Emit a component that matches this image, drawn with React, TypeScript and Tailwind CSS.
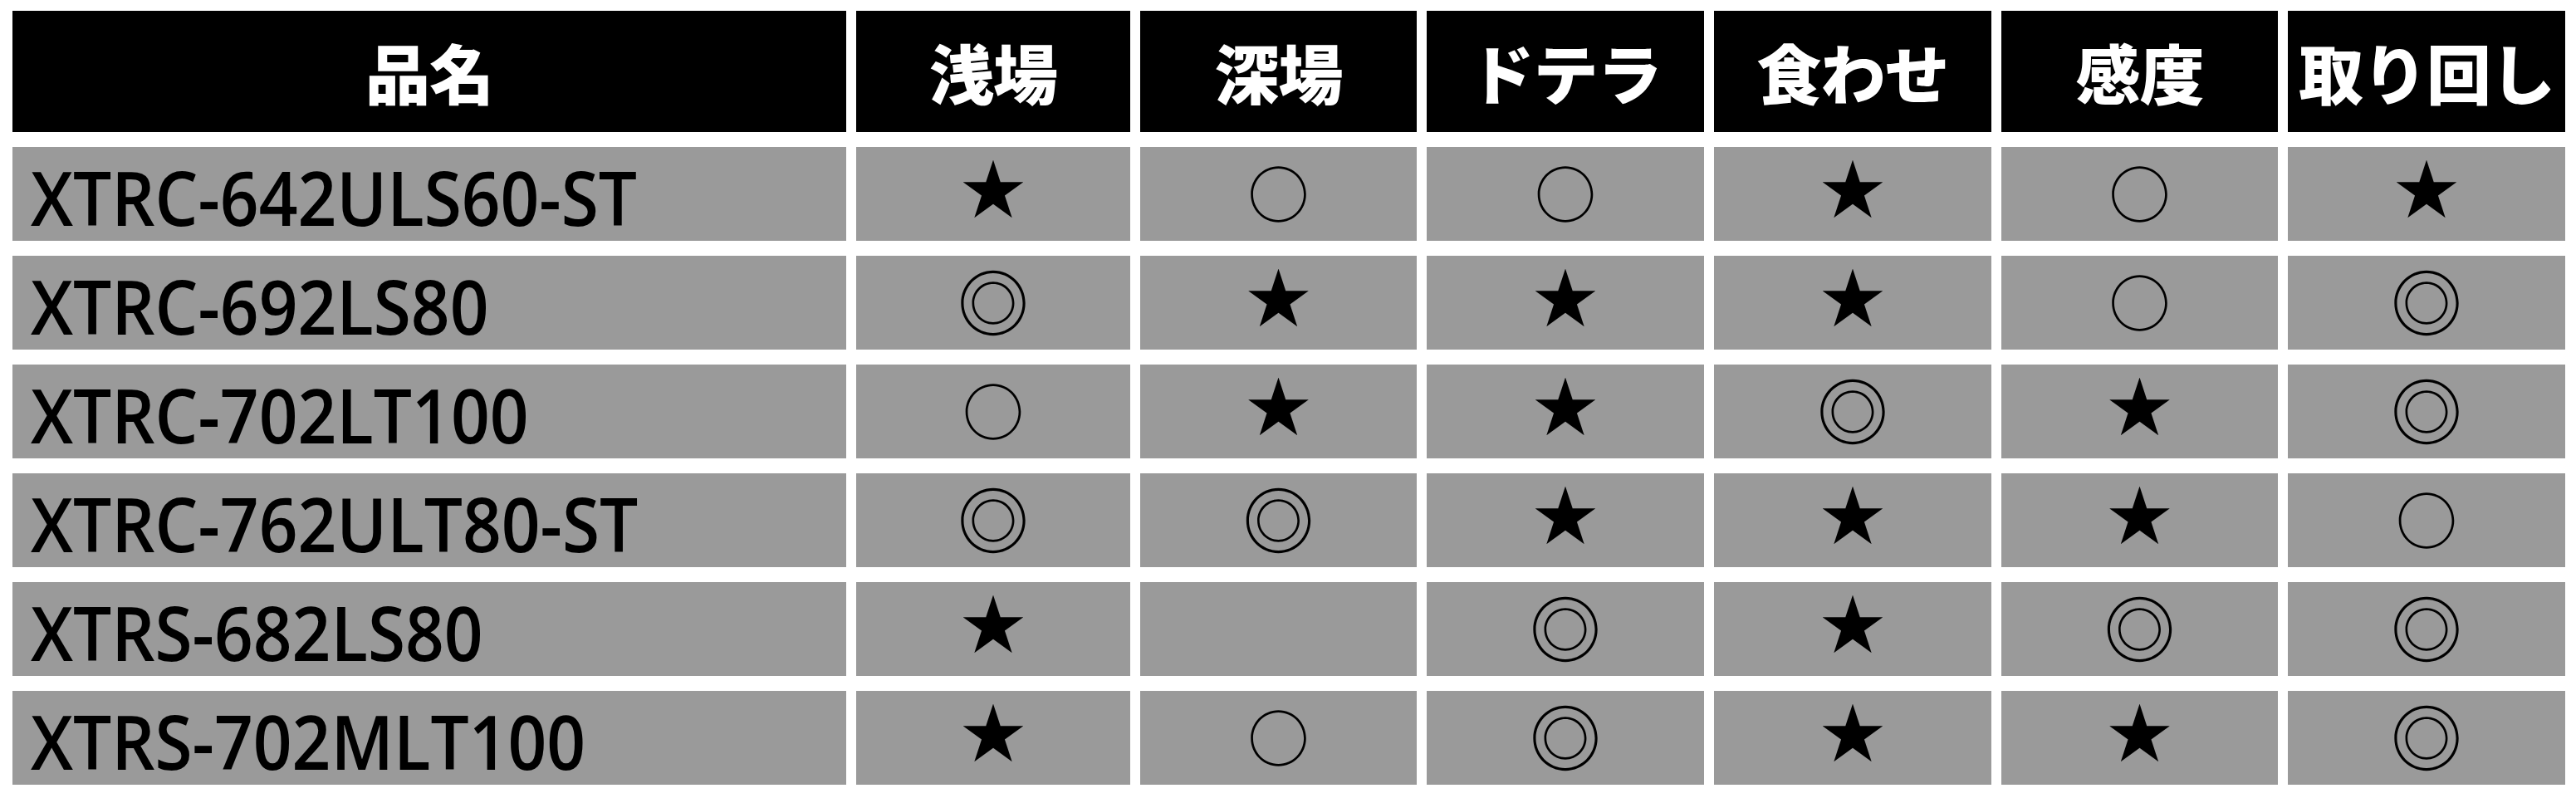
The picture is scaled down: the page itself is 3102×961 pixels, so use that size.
const headers = ['浅場', '深場', 'ドテラ', '食わせ', '感度', '取り回し']

const rows: { name: string; marks: string[] }[] = [
  { name: 'XTRC-642ULS60-ST', marks: ['★', '○', '○', '★', '○', '★'] },
  { name: 'XTRC-692LS80', marks: ['◎', '★', '★', '★', '○', '◎'] },
  { name: 'XTRC-702LT100', marks: ['○', '★', '★', '◎', '★', '◎'] },
  { name: 'XTRC-762ULT80-ST', marks: ['◎', '◎', '★', '★', '★', '○'] },
  { name: 'XTRS-682LS80', marks: ['★', '', '◎', '★', '◎', '◎'] },
  { name: 'XTRS-702MLT100', marks: ['★', '○', '◎', '★', '★', '◎'] },
]

const markStyle: Record<string, string> = {
  '★': 'text-[78px] -translate-y-[11px]',
  '○': 'text-[74px] -translate-y-[4px]',
  '◎': 'text-[86px] -translate-y-[4px]',
}

const HeadCell = ({ label }: { label: string }) => (
  <div className="bg-black flex items-center justify-center">
    <span className="text-white text-[78px] leading-none font-black tracking-[-1px] font-['Noto_Sans_CJK_JP',sans-serif]">
      {label}
    </span>
  </div>
)

const Mark = ({ value }: { value: string }) => (
  <div className="bg-[#9a9a9a] flex items-center justify-center">
    <span className={`inline-block text-black leading-none font-['Noto_Sans_CJK_JP',sans-serif] ${markStyle[value] ?? ''}`}>
      {value}
    </span>
  </div>
)

export default function App() {
  return (
    <div className="w-[3102px] h-[961px] bg-white pt-[13px] pl-[15px]">
      <div className="grid grid-cols-[1004px_330px_333px_334px_334px_333px_334px] grid-rows-[146px_repeat(6,113px)] gap-x-[12px] gap-y-[18px]">
        <HeadCell label="品名" />
        {headers.map((h) => (
          <HeadCell key={h} label={h} />
        ))}
        {rows.map((r) => (
          <div key={r.name} className="contents">
            <div className="bg-[#9a9a9a] flex items-center pl-[22px] pt-[6px]">
              <span className="inline-block origin-left scale-x-[0.91] text-black text-[90px] leading-none font-semibold font-['Open_Sans',sans-serif] whitespace-nowrap">
                {r.name}
              </span>
            </div>
            {r.marks.map((m, i) => (
              <Mark key={i} value={m} />
            ))}
          </div>
        ))}
      </div>
    </div>
  )
}
